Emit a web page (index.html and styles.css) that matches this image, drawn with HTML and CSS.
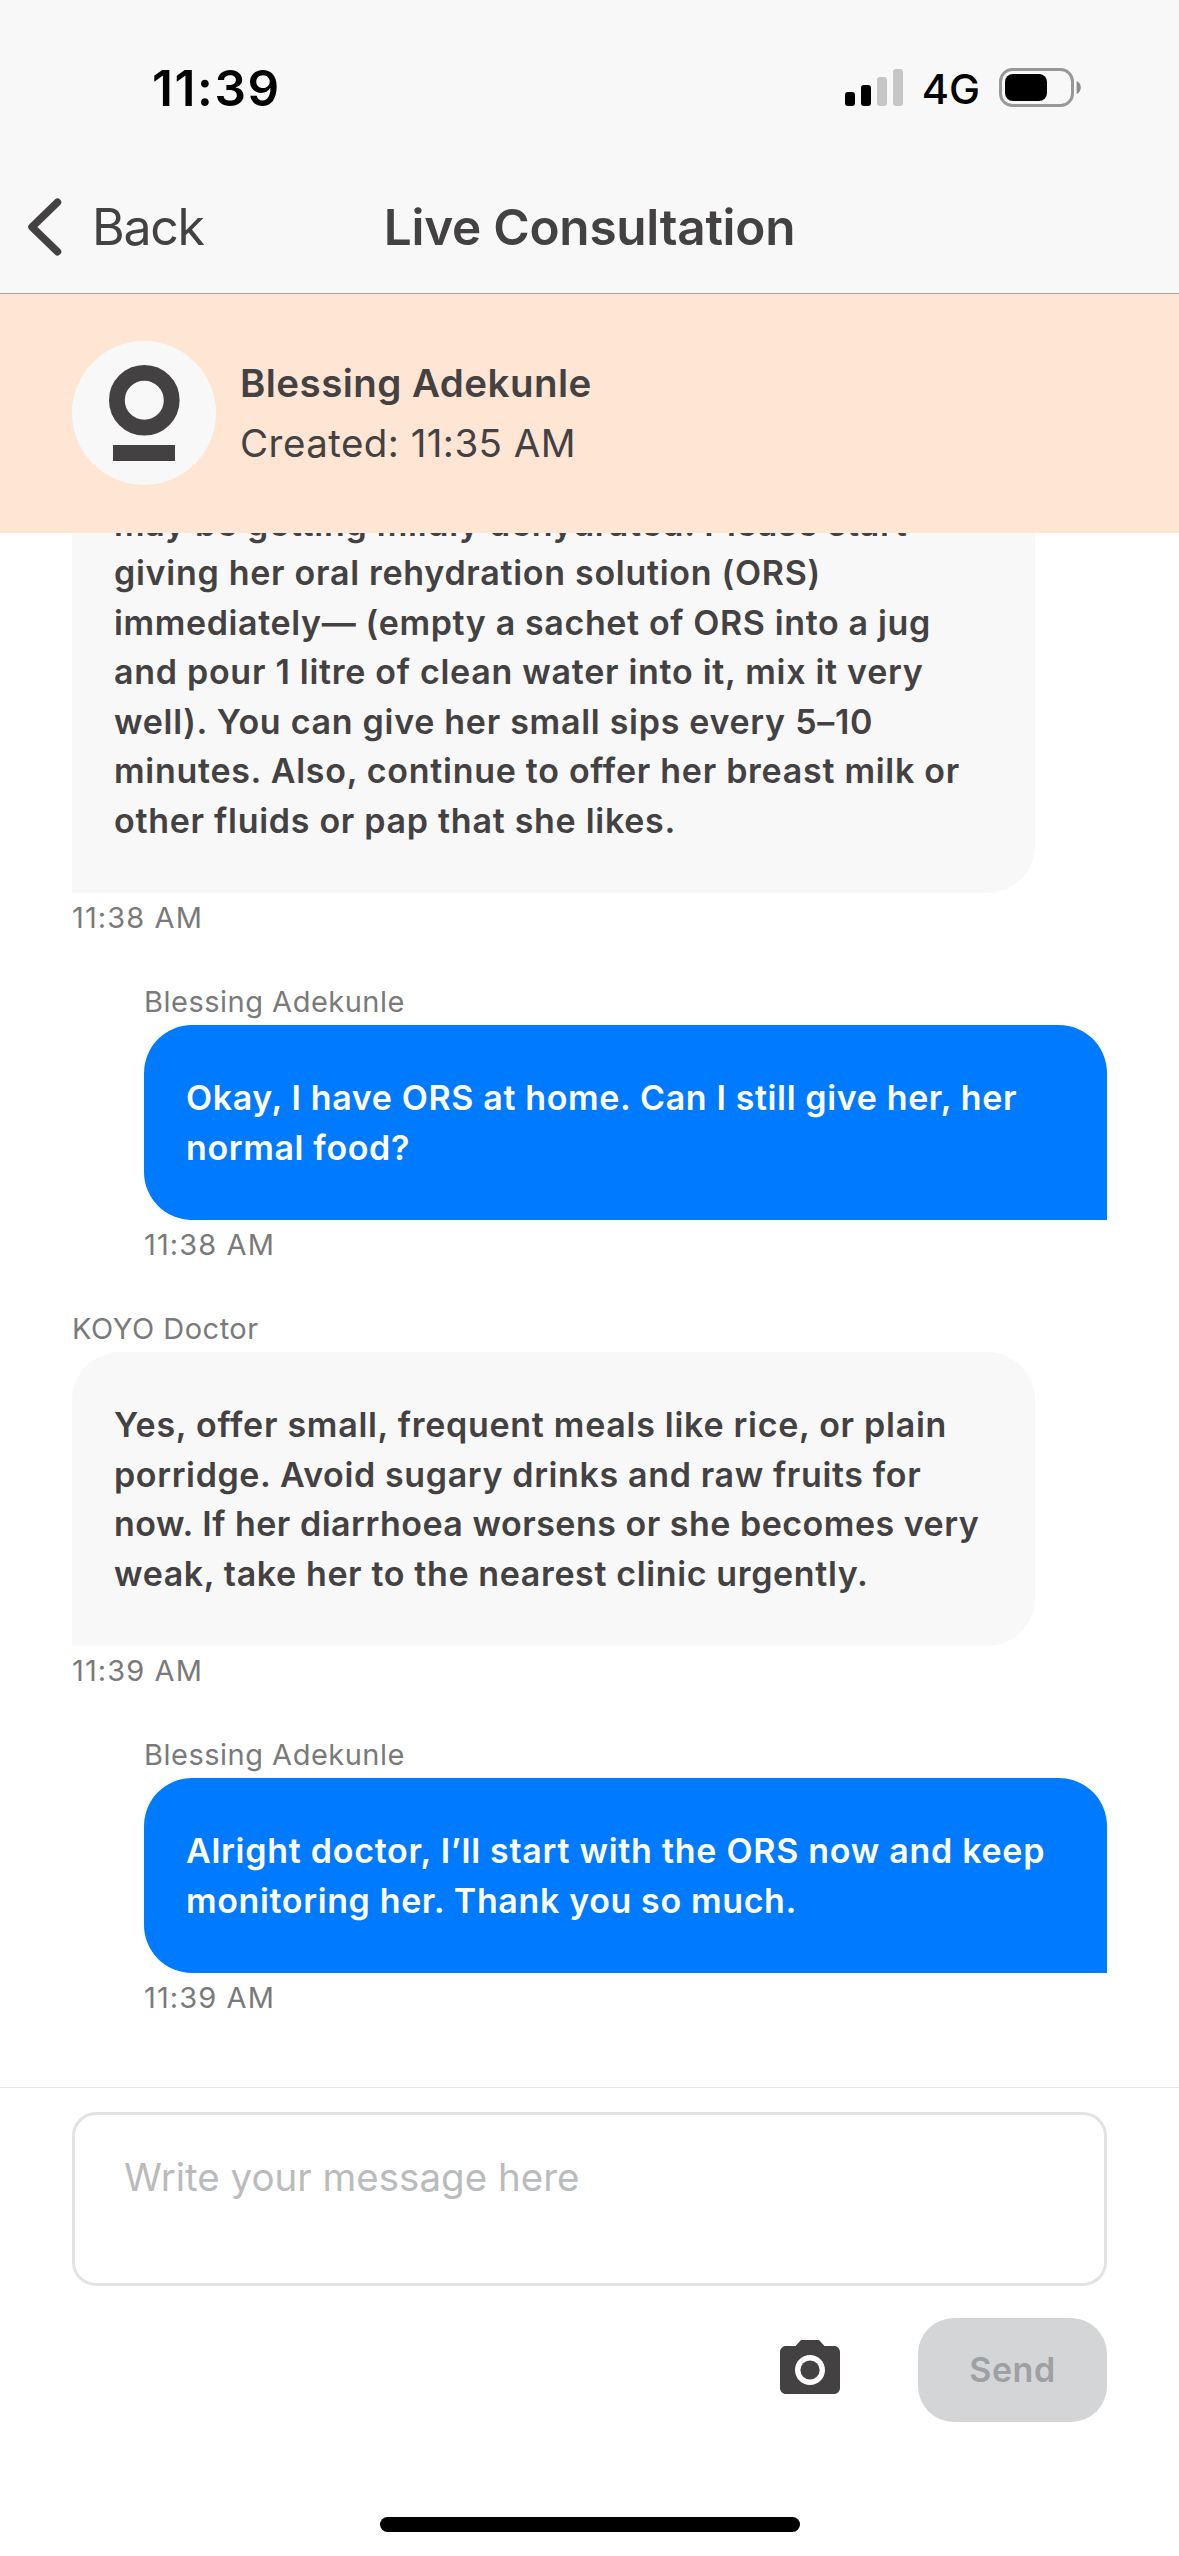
FILE: index.html
```html
<!DOCTYPE html>
<html lang="en">
<head>
  <meta charset="utf-8">
  <title>Live Consultation</title>
  <link rel="stylesheet" href="styles.css">
</head>
<body>
  <div class="screen">
    <div class="status-bar">
      <span class="clock">11:39</span>
      <div class="indicators">
        <svg class="signal" width="59" height="38" viewBox="0 0 59 38">
          <rect x="0" y="23" width="10" height="14" rx="3"/>
          <rect x="16" y="16" width="10" height="21" rx="3"/>
          <rect class="dim" x="32" y="8" width="10" height="29" rx="3"/>
          <rect class="dim" x="48" y="0" width="10" height="37" rx="3"/>
        </svg>
        <span class="network">4G</span>
        <svg class="battery" width="82" height="39" viewBox="0 0 82 39">
          <rect class="shell" x="1.5" y="1.5" width="72" height="36" rx="12"/>
          <rect x="6" y="6" width="42" height="27" rx="8"/>
          <path class="nub" d="M77.6 13c2.6 1 4.2 3.600 4.200 6.500s-1.600 5.500-4.200 6.500z"/>
        </svg>
      </div>
    </div>

    <header class="nav">
      <div class="back">
        <svg class="chevron" width="34" height="58" viewBox="0 0 34 58">
          <path d="M29.500 4.300 4 29 29.500 53.700"/>
        </svg>
        <span class="back-label">Back</span>
      </div>
      <h1 class="title">Live Consultation</h1>
    </header>

    <section class="patient">
      <svg class="avatar" width="144" height="144" viewBox="0 0 144 144">
        <circle class="avatar-disc" cx="72" cy="72" r="72"/>
        <circle class="avatar-ring" cx="72.300" cy="59.200" r="27.400"/>
        <rect class="avatar-bar" x="41" y="104" width="62" height="16"/>
      </svg>
      <div class="patient-info">
        <div class="patient-name">Blessing Adekunle</div>
        <div class="patient-created">Created: 11:35 AM</div>
      </div>
    </section>

    <main class="chat">
      <article class="message doctor">
        <div class="bubble">may be getting mildly dehydrated. Please start<br>giving her oral rehydration solution (ORS)<br><span class="snug">immediately— (empty a sachet of ORS into a jug</span><br>and pour 1 litre of clean water into it, mix it very<br>well). You can give her small sips every 5–10<br>minutes. Also, continue to offer her breast milk or<br>other fluids or pap that she likes.</div>
        <div class="meta">11:38 AM</div>
      </article>
      <article class="message user">
        <div class="meta">Blessing Adekunle</div>
        <div class="bubble"><span class="snug">Okay, I have ORS at home. Can I still give her, her<br>normal food?</span></div>
        <div class="meta">11:38 AM</div>
      </article>
      <article class="message doctor">
        <div class="meta">KOYO Doctor</div>
        <div class="bubble">Yes, offer small, frequent meals like rice, or plain<br><span class="snug">porridge. Avoid sugary drinks and raw fruits for</span><br><span class="snugger">now. If her diarrhoea worsens or she becomes very</span><br><span class="snug">weak, take her to the nearest clinic urgently.</span></div>
        <div class="meta">11:39 AM</div>
      </article>
      <article class="message user">
        <div class="meta">Blessing Adekunle</div>
        <div class="bubble">Alright doctor, I’ll start with the ORS now and keep<br><span class="snug">monitoring her. Thank you so much.</span></div>
        <div class="meta">11:39 AM</div>
      </article>
    </main>

    <footer class="composer">
      <div class="input" role="textbox">Write your message here</div>
      <div class="actions">
        <svg class="camera" width="72" height="72" viewBox="0 0 24 24">
          <circle cx="12" cy="12" r="3.200"/>
          <path d="M9 2 7.170 4H4c-1.100 0-2 .9-2 2v12c0 1.100.9 2 2 2h16c1.100 0 2-.9 2-2V6c0-1.100-.9-2-2-2h-3.170L15 2H9zm3 15c-2.760 0-5-2.240-5-5s2.240-5 5-5 5 2.240 5 5-2.240 5-5 5z"/>
        </svg>
        <button class="send" disabled>Send</button>
      </div>
      <div class="home-indicator"></div>
    </footer>
  </div>
</body>
</html>
```
FILE: styles.css
```css
* {
  box-sizing: border-box;
}

body {
  margin: 0;
  background: #fff;
  color: #434142;
  font-family: Inter, "Liberation Sans", sans-serif;
}

.screen {
  display: flex;
  flex-direction: column;
  width: 1179px;
  height: 2556px;
  overflow: hidden;
}

/* Status bar */
.status-bar {
  display: flex;
  align-items: center;
  justify-content: space-between;
  flex: none;
  height: 160px;
  padding: 16px 98px 0 152px;
  background: #f8f8f8;
  color: #000;
}

.clock {
  font-size: 49.5px;
  font-weight: 600;
  line-height: 60px;
  letter-spacing: 1.6px;
}

.indicators {
  display: flex;
  align-items: center;
}

.signal .dim {
  fill: #c6c6c6;
}

.network {
  margin: 2px 0 0 18px;
  font-size: 41.5px;
  font-weight: 500;
  line-height: 50px;
}

.battery {
  margin: -1px 0 0 19px;
}

.battery .shell {
  fill: none;
  stroke: #989898;
  stroke-width: 3;
}

.battery .nub {
  fill: #8c8c8c;
}

/* Navigation */
.nav {
  display: grid;
  grid-template-columns: 1fr auto 1fr;
  align-items: center;
  flex: none;
  height: 134px;
  border-bottom: 1px solid #a6a3a1;
  background: #f8f8f8;
}

.back {
  display: flex;
  align-items: center;
  padding-left: 28px;
}

.chevron path {
  fill: none;
  stroke: #434142;
  stroke-width: 7.500;
  stroke-linecap: round;
  stroke-linejoin: round;
}

.back-label {
  margin-left: 30px;
  font-size: 50px;
  line-height: 60px;
  letter-spacing: -1.3px;
}

.title {
  margin: 0;
  font-size: 49.5px;
  font-weight: 600;
  line-height: 60px;
  letter-spacing: -0.26px;
}

/* Patient banner */
.patient {
  display: flex;
  align-items: center;
  flex: none;
  gap: 24px;
  height: 239px;
  padding: 0 72px 1px;
  background: #ffe5d4;
}

.avatar-disc {
  fill: #f8f8f8;
}

.avatar-ring {
  fill: none;
  stroke: #434142;
  stroke-width: 15.800;
}

.avatar-bar {
  fill: #434142;
}

.patient-info {
  font-size: 38.5px;
  line-height: 60px;
  letter-spacing: 0.45px;
}

.patient-name {
  font-weight: 600;
}

/* Conversation */
.chat {
  display: flex;
  flex-direction: column;
  justify-content: flex-end;
  flex: none;
  gap: 48px;
  height: 1554px;
  padding: 0 72px 71px;
  overflow: hidden;
}

.message {
  display: flex;
  flex-direction: column;
  gap: 5px;
  width: 963px;
}

.message.user {
  align-self: flex-end;
}

.meta {
  color: #7a7a7a;
  font-size: 29px;
  line-height: 36px;
  letter-spacing: 0.5px;
}

.bubble + .meta {
  margin-top: 2px;
  letter-spacing: 1.1px;
}

.bubble {
  padding: 48px 42px;
  font-size: 34px;
  font-weight: 600;
  line-height: 49.5px;
  letter-spacing: 0.72px;
  white-space: nowrap;
}

.snug {
  letter-spacing: 0.63px;
}

.snugger {
  letter-spacing: 0.5px;
}

.doctor .bubble {
  border-radius: 48px 48px 48px 0;
  background: #f8f8f8;
}

.user .bubble {
  border-radius: 48px 48px 0 48px;
  background: #007aff;
  color: #fff;
}

/* Composer */
.composer {
  display: flex;
  flex-direction: column;
  flex: 1;
  padding: 24px 72px;
  border-top: 1px solid #e3e3e3;
}

.input {
  height: 174px;
  padding: 38px 49px;
  border: 3px solid #e3e3e3;
  border-radius: 24px;
  color: #babbbc;
  font-size: 38.5px;
  line-height: 48px;
}

.actions {
  display: flex;
  align-items: center;
  justify-content: flex-end;
  gap: 72px;
  height: 104px;
  margin-top: 32px;
}

.camera {
  fill: #434142;
}

.send {
  width: 189px;
  height: 104px;
  padding: 0;
  border: 0;
  border-radius: 36px;
  background: #d4d5d7;
  color: #9fa0a1;
  font: 600 34px/50px Inter, "Liberation Sans", sans-serif;
  letter-spacing: 0.56px;
}

.home-indicator {
  align-self: center;
  width: 420px;
  height: 15px;
  margin-top: auto;
  border-radius: 8px;
  background: #000;
}
```
